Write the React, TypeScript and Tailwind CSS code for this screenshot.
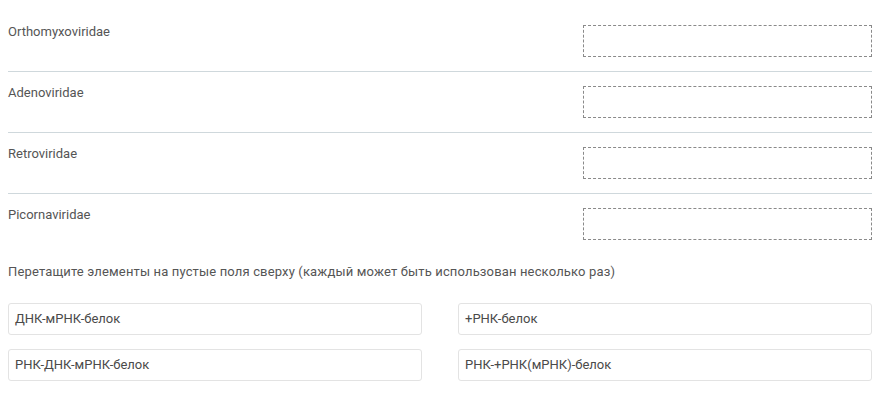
const ROWS = ["Orthomyxoviridae", "Adenoviridae", "Retroviridae", "Picornaviridae"];

const ITEMS = [
  "ДНК-мРНК-белок",
  "+РНК-белок",
  "РНК-ДНК-мРНК-белок",
  "РНК-+РНК(мРНК)-белок",
];

export default function App() {
  return (
    <div
      className="min-h-[395px] bg-white pt-[11px] pl-2 text-[13px] text-[#555]"
      style={{ fontFamily: "Roboto, 'Noto Sans', sans-serif" }}
    >
      <div className="w-[864px]">
        {ROWS.map((name, i) => (
          <div
            key={name}
            className={
              "flex items-start justify-between py-[14px] " +
              (i < ROWS.length - 1 ? "border-b border-[#cfd8dc]" : "")
            }
          >
            <div className="mt-[-2px] leading-[18px]">{name}</div>
            <div className="h-8 w-[289px] border border-dashed border-[#8a8a8a]" />
          </div>
        ))}

        <p className="mt-[9px] leading-[18px] tracking-[0.15px]">
          Перетащите элементы на пустые поля сверху (каждый может быть использован несколько раз)
        </p>

        <div className="mt-[22px] grid grid-cols-2 gap-x-9 gap-y-[14px]">
          {ITEMS.map((item) => (
            <div
              key={item}
              className="flex h-8 items-center rounded-[3px] border border-[#e3e3e3] px-[6px] text-[#4a4a4a]"
            >
              {item}
            </div>
          ))}
        </div>
      </div>
    </div>
  );
}
